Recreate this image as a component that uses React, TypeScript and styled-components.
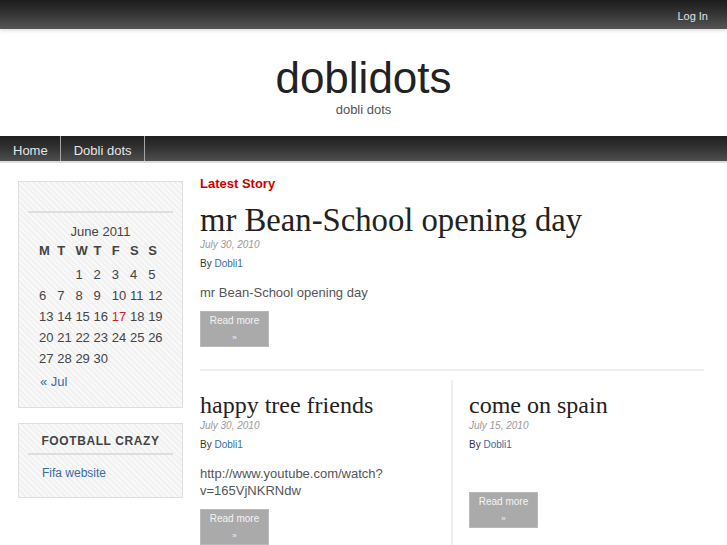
import React from "react";
import styled, { createGlobalStyle } from "styled-components";

const GlobalStyle = createGlobalStyle`
  html, body { margin: 0; padding: 0; background: #fff; }
  body { font-family: "Liberation Sans", Arial, sans-serif; color: #333; }
  * { box-sizing: border-box; }
  a { text-decoration: none; }
`;

const TopBar = styled.div`
  height: 29px;
  background: linear-gradient(to bottom, #1c1c1c 0%, #333 45%, #555 100%);
  display: flex;
  justify-content: flex-end;
  align-items: center;
  padding: 2px 19px 0 0;
  box-shadow: 0 2px 3px rgba(0, 0, 0, 0.12);
  position: relative;
`;

const LoginLink = styled.a`
  color: #e2e2e2;
  font-size: 11px;
`;

const Header = styled.header`
  padding: 25px 0 18px;
  text-align: center;
`;

const SiteTitle = styled.h1`
  margin: 0;
  font-size: 44px;
  line-height: 48px;
  font-weight: normal;
  color: #222;
`;

const Tagline = styled.div`
  font-size: 13px;
  line-height: 16px;
  color: #555;
`;

const NavBar = styled.nav`
  height: 27px;
  background: linear-gradient(to bottom, #202020 0%, #333 50%, #4e4e4e 100%);
  border-bottom: 2px solid #dcdcdc;
  display: flex;
`;

const NavItem = styled.a`
  display: flex;
  align-items: center;
  height: 25px;
  padding: 3px 12px 0 13px;
  color: #e6e6e6;
  font-size: 13px;
  border-right: 1px solid #a5a5a5;
`;

const Body = styled.div`
  display: flex;
  align-items: flex-start;
  gap: 17px;
  padding: 12px 0 40px 18px;
`;

const Sidebar = styled.aside`
  width: 165px;
  margin-top: 6px;
  display: flex;
  flex-direction: column;
  gap: 15px;
`;

const Widget = styled.section`
  border: 1px solid #dedede;
  background: repeating-linear-gradient(
    45deg,
    #f1f1f1 0px,
    #f1f1f1 2px,
    #f9f9f9 2px,
    #f9f9f9 4px
  );
  padding: 10px 9px 16px;
`;

const WidgetTitle = styled.h3`
  margin: 0;
  height: 14px;
  font-size: 12px;
  line-height: 14px;
  font-weight: bold;
  letter-spacing: 0.6px;
  color: #444;
  text-align: center;
  padding-bottom: 5px;
  box-sizing: content-box;
  border-bottom: 2px solid #dedede;
`;

const Caption = styled.div`
  margin-top: 10px;
  text-align: center;
  font-size: 13px;
  line-height: 18px;
  color: #444;
`;

const CalGrid = styled.div`
  display: grid;
  grid-template-columns: repeat(7, 18.2px);
  margin-left: 11px;
`;

const DayHead = styled.div`
  font-size: 13px;
  font-weight: bold;
  line-height: 20px;
  color: #444;
  margin-bottom: 3px;
`;

const DayCell = styled.div<{ $today?: boolean }>`
  font-size: 13px;
  line-height: 21px;
  color: ${(p) => (p.$today ? "#d01f1f" : "#444")};
  white-space: nowrap;
`;

const WidgetLink = styled.a<{ $indent?: boolean }>`
  display: block;
  font-size: ${(p) => (p.$indent ? "12px" : "13px")};
  line-height: ${(p) => (p.$indent ? "16px" : "18px")};
  color: #3a6c9f;
  margin-top: ${(p) => (p.$indent ? "10px" : "4px")};
  padding-left: ${(p) => (p.$indent ? "14px" : "12px")};
`;

const Main = styled.main`
  width: 504px;
`;

const LatestLabel = styled.div`
  font-size: 13px;
  line-height: 17px;
  font-weight: bold;
  color: #cc0000;
`;

const PostTitle = styled.h2<{ $big?: boolean }>`
  margin: ${(p) => (p.$big ? "10px 0 0" : "0")};
  font-family: "Liberation Serif", "Times New Roman", serif;
  font-weight: normal;
  font-size: ${(p) => (p.$big ? "32.7px" : "24px")};
  line-height: ${(p) => (p.$big ? "36px" : "28px")};
  color: #222;
  white-space: nowrap;
`;

const PostDate = styled.div`
  font-size: 10px;
  line-height: 13px;
  font-style: italic;
  color: #999;
`;

const Byline = styled.div`
  margin-top: 4px;
  font-size: 10px;
  line-height: 17px;
  color: #333;
`;

const AuthorLink = styled.a`
  color: #3a6c9f;
`;

const Excerpt = styled.p`
  margin: 12px 0 0;
  font-size: 13px;
  line-height: 17px;
  color: #555;
`;

const ReadMore = styled.a`
  display: block;
  margin-top: 10px;
  width: 69px;
  height: 36px;
  background: #aaaaaa;
  border: 1px solid #b9b9b9;
  color: #f4f4f4;
  text-align: center;
  font-size: 10px;
  line-height: 17px;
`;

const Raquo = styled.span`
  display: block;
  font-size: 8px;
  line-height: 18px;
`;

const Divider = styled.hr`
  margin: 22px 0 0;
  border: 0;
  height: 2px;
  background: #eeeeee;
`;

const Columns = styled.div`
  display: grid;
  grid-template-columns: 251px 2px 1fr;
  margin-top: 9px;
`;

const Column = styled.article<{ $right?: boolean }>`
  padding: 11px 0 0 ${(p) => (p.$right ? "16px" : "0")};
  min-width: 0;
`;

const ColumnRule = styled.div`
  background: #eeeeee;
`;

const days = ["M", "T", "W", "T", "F", "S", "S"];

const weeks: (number | null)[][] = [
  [null, null, 1, 2, 3, 4, 5],
  [6, 7, 8, 9, 10, 11, 12],
  [13, 14, 15, 16, 17, 18, 19],
  [20, 21, 22, 23, 24, 25, 26],
  [27, 28, 29, 30, null, null, null],
];

function Post(props: {
  title: string;
  date: string;
  excerpt: React.ReactNode;
  big?: boolean;
}) {
  return (
    <>
      <PostTitle $big={props.big}>{props.title}</PostTitle>
      <PostDate>{props.date}</PostDate>
      <Byline>
        By <AuthorLink href="#">Dobli1</AuthorLink>
      </Byline>
      <Excerpt>{props.excerpt}</Excerpt>
      <ReadMore href="#">
        Read more
        <Raquo>»</Raquo>
      </ReadMore>
    </>
  );
}

export default function App() {
  return (
    <>
      <GlobalStyle />
      <TopBar>
        <LoginLink href="#">Log In</LoginLink>
      </TopBar>
      <Header>
        <SiteTitle>doblidots</SiteTitle>
        <Tagline>dobli dots</Tagline>
      </Header>
      <NavBar>
        <NavItem href="#">Home</NavItem>
        <NavItem href="#">Dobli dots</NavItem>
      </NavBar>
      <Body>
        <Sidebar>
          <Widget>
            <WidgetTitle />
            <Caption>June 2011</Caption>
            <CalGrid>
              {days.map((d, i) => (
                <DayHead key={"h" + i}>{d}</DayHead>
              ))}
              {weeks.flat().map((n, i) => (
                <DayCell key={"d" + i} $today={n === 17}>
                  {n ?? ""}
                </DayCell>
              ))}
            </CalGrid>
            <WidgetLink href="#">« Jul</WidgetLink>
          </Widget>
          <Widget>
            <WidgetTitle>FOOTBALL CRAZY</WidgetTitle>
            <WidgetLink href="#" $indent>
              Fifa website
            </WidgetLink>
          </Widget>
        </Sidebar>
        <Main>
          <LatestLabel>Latest Story</LatestLabel>
          <Post
            big
            title="mr Bean-School opening day"
            date="July 30, 2010"
            excerpt="mr Bean-School opening day"
          />
          <Divider />
          <Columns>
            <Column>
              <Post
                title="happy tree friends"
                date="July 30, 2010"
                excerpt={
                  <>
                    http://www.youtube.com/watch?
                    <wbr />
                    v=165VjNKRNdw
                  </>
                }
              />
            </Column>
            <ColumnRule />
            <Column $right>
              <Post title="come on spain" date="July 15, 2010" excerpt={"\u00a0"} />
            </Column>
          </Columns>
        </Main>
      </Body>
    </>
  );
}
